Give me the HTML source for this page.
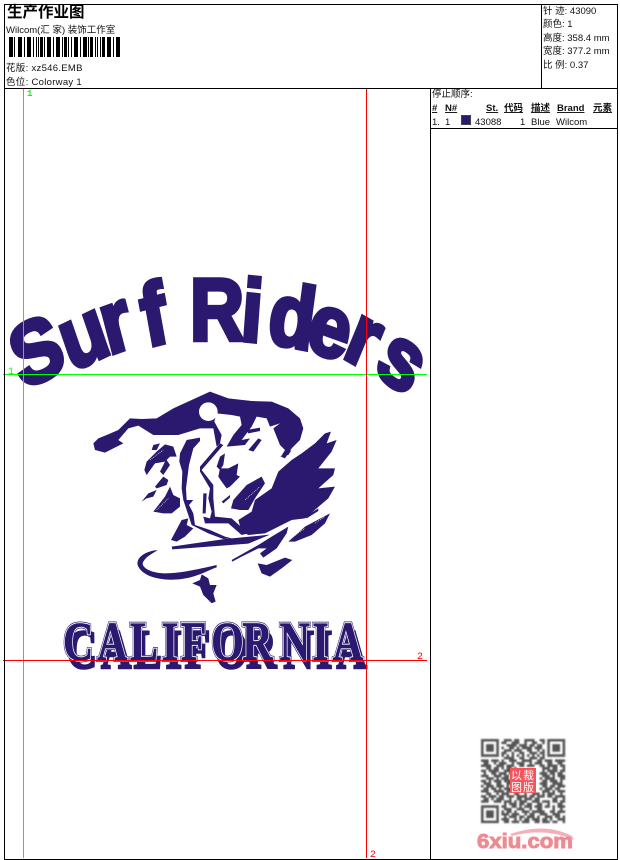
<!DOCTYPE html>
<html><head><meta charset="utf-8"><style>
html,body{margin:0;padding:0;background:#fff;width:620px;height:860px;overflow:hidden}
svg{display:block}
.t{font-family:"Liberation Sans","WenQuanYi Zen Hei","Noto Sans CJK SC",sans-serif;font-size:9.5px;fill:#111}
.b{font-family:"Liberation Sans","Noto Sans CJK SC",sans-serif;font-size:9.5px;font-weight:bold;fill:#111;text-decoration:underline}
.m{font-family:"Liberation Mono",monospace;font-size:10px;font-weight:bold}
</style></head><body>
<svg width="620" height="860" viewBox="0 0 620 860" xmlns="http://www.w3.org/2000/svg">
<defs><filter id="s" x="-5%" y="-5%" width="110%" height="110%"><feGaussianBlur stdDeviation="0.35"/></filter></defs>
<rect width="620" height="860" fill="#fff"/>

<!-- artwork -->
<g fill="#2a196f">
<g transform="scale(.85 1)">
<text font-family="Liberation Sans" font-weight="bold" font-size="88" stroke="#2a196f" stroke-width="4.5" stroke-linejoin="miter" x="27 83.5 128 173 0 223.5 282 313 357 401 438" y="390 372 355 347 0 340 340 342 348 356 371" rotate="-22 -22 -17 -12 0 0 5 9 17 26 33">Surf Riders</text>
</g>

<g transform="translate(85 385) scale(.3333)">
<path d="M25 175 40 160 65 150 100 135 135 100 170 102 215 100 265 70 320 45 375 20 430 40 500 48 560 50 610 70 645 100 655 130 645 165 620 190 600 220 588 215 600 195 585 180 565 130 585 115 555 125 545 100 515 95 500 125 470 165 495 160 480 180 425 185 445 150 470 120 465 95 440 90 395 85 388 110 410 150 405 175 395 185 385 130 345 130 280 150 205 150 160 122 130 130 100 165 115 175 85 190 60 203 30 195Z"/>
<circle cx="370" cy="80" r="28" fill="#fff"/>
<path d="M650 205 690 175 720 145 738 140 725 175 755 165 740 200 700 250 750 250 745 270 700 310 750 305 730 340 660 400 620 405 570 430 540 445 490 450 470 440 460 405 500 380 510 345 560 310 580 260 620 225Z"/>
<path d="M610 470 660 425 735 385 720 415 680 450 630 470ZM660 395 700 370 700 378 665 400Z"/>
<path d="M260 485 420 462 555 449 490 476 262 493Z"/>
<path d="M440 525 520 480 560 455 610 425 605 445 575 490 535 518 525 505 545 490 520 490 470 515 442 530Z"/>
<path d="M518 535 545 540 600 518 622 525 590 550 555 575 530 565Z"/>
<path d="M218 495C170 500 150 525 160 545C175 575 230 590 290 582C340 575 370 555 395 547L395 540C350 550 290 565 240 565C195 565 165 545 175 530C185 512 205 505 218 495Z"/>
<path d="M350 568 370 580 375 600 395 600 385 625 392 650 380 655 355 630 345 605 322 595 345 585Z"/>
<path d="M205 180 225 175 215 195 200 195Z"/>
<path d="M185 230 215 200 240 178 265 185 275 215 255 215 245 225 255 240 235 270 225 260 240 230 210 235 185 270 178 255Z"/>
<path d="M210 305 235 275 250 285 245 300 215 310ZM170 350 190 325 215 315 205 335 185 340Z"/>
<path d="M205 380 240 335 255 305 265 330 285 340 285 365 260 385 235 385Z"/>
<path d="M285 205 305 165 345 158 345 168 325 190 312 240 303 310 305 345 325 345 312 360 325 385 330 420 375 435 420 455 440 460 415 462 370 445 320 420 305 375 295 345 290 310 292 260 283 230Z"/>
<path d="M405 175 415 180 350 255 385 300 385 340 390 395 440 400 490 445 470 450 430 415 360 415 355 395 375 400 380 380 370 340 375 310 345 260 345 245Z"/>
<path d="M355 325 365 325 362 385 353 385Z"/>
<path d="M405 215 420 205 415 240 405 255 395 245ZM430 250 460 235 455 270 465 275 435 305 425 310 410 290 400 275 405 250ZM410 350 435 330 435 338 415 355Z"/>
<path d="M438 370 445 345 485 300 530 275 540 295 510 340 490 375 465 375Z"/>
<path d="M490 195 520 160 530 165 505 200ZM485 135 525 128 525 138 490 145ZM585 215 620 195 610 210Z"/>
<path d="M258 465 290 405 310 400 305 420 325 430 300 455 275 470Z"/>
<path d="M625 455 660 430M690 415 720 395M195 225 235 195M480 345 525 305M215 375 250 340" stroke="#fff" stroke-width="2" stroke-dasharray="3 3" fill="none"/>
</g>
</g>

<!-- CALIFORNIA -->
<g transform="scale(.76 1)" font-family="Liberation Serif" font-weight="bold" font-size="55">
<text x="88 133 176 218 243 283 324 373 416 443" y="668" fill="#2a196f" stroke="#2a196f" stroke-width="2.5">CALIFORNIA</text>
<text x="83 128 171 213 238 278 319 368 411 438" y="660" fill="#fff" stroke="#2a196f" stroke-width="4">CALIFORNIA</text>
<text x="83 128 171 213 238 278 319 368 411 438" y="660" fill="#fff" stroke="#fff" stroke-width="2.6">CALIFORNIA</text>
<text x="83 128 171 213 238 278 319 368 411 438" y="660" fill="#2a196f" stroke="#2a196f" stroke-width=".8">CALIFORNIA</text>
</g>

<!-- guides -->
<rect x="23" y="89" width="1" height="769" fill="#0f0"/>
<rect x="3" y="374" width="424" height="1" fill="#0f0"/>
<rect x="366" y="89" width="1" height="769" fill="#f00"/>
<rect x="3" y="660" width="424" height="1" fill="#f00"/>
<text class="m" x="27" y="96" fill="#0f0" style="font-size:9px">1</text>
<text class="m" x="8" y="374" fill="#0f0" style="font-size:10px;font-weight:normal">1</text>
<text class="m" x="417" y="659" fill="#f00" style="font-weight:normal">2</text>
<text class="m" x="370" y="857" fill="#f00" style="font-weight:normal">2</text>

<!-- frame -->
<g fill="#000">
<rect x="4" y="4" width="614" height="1"/>
<rect x="4" y="859" width="614" height="1"/>
<rect x="4" y="4" width="1" height="856"/>
<rect x="617" y="4" width="1" height="856"/>
<rect x="4" y="88" width="614" height="1"/>
<rect x="541" y="4" width="1" height="85"/>
<rect x="430" y="88" width="1" height="772"/>
<rect x="430" y="128" width="188" height="1"/>
</g>

<!-- header -->
<text x="7" y="17" font-family="'WenQuanYi Zen Hei','Noto Sans CJK SC',sans-serif" font-size="15.5" font-weight="bold" fill="#000">生产作业图</text>
<text class="t" x="6" y="33">Wilcom(汇 家) 装饰工作室</text>
<path stroke="#000" fill="none" stroke-width="1" d="M9.5 37V57M12.5 37V57M14.5 37V57M18.5 37V57M21.5 37V57M24.5 37V57M27.5 37V57M30.5 37V57M33.5 37V57M36.5 37V57M38.5 37V57M42.5 37V57M44.5 37V57M47.5 37V57M50.5 37V57M53.5 37V57M56.5 37V57M59.5 37V57M62.5 37V57M66.5 37V57M68.5 37V57M71.5 37V57M74.5 37V57M77.5 37V57M80.5 37V57M83.5 37V57M86.5 37V57M88.5 37V57M92.5 37V57M95.5 37V57M97.5 37V57M100.5 37V57M104.5 37V57M107.5 37V57M110.5 37V57M113.5 37V57M116.5 37V57M119.5 37V57"/>
<path stroke="#000" fill="none" stroke-width="2" d="M11 37V57M20 37V57M29 37V57M41 37V57M49 37V57M58 37V57M65 37V57M76 37V57M85 37V57M91 37V57M103 37V57M109 37V57M118 37V57"/>
<text class="t" x="6" y="71" letter-spacing=".3">花版: xz546.EMB</text>
<text class="t" x="6" y="85" letter-spacing=".3">色位: Colorway 1</text>

<text class="t" x="543" y="14">针 迹: 43090</text>
<text class="t" x="543" y="27">颜色: 1</text>
<text class="t" x="543" y="41">高度: 358.4 mm</text>
<text class="t" x="543" y="54">宽度: 377.2 mm</text>
<text class="t" x="543" y="68">比 例: 0.37</text>

<text class="t" x="432" y="97">停止顺序:</text>
<text class="b" x="432" y="111">#</text>
<text class="b" x="445" y="111">N#</text>
<text class="b" x="486" y="111">St.</text>
<text class="b" x="504" y="111">代码</text>
<text class="b" x="531" y="111">描述</text>
<text class="b" x="557" y="111">Brand</text>
<text class="b" x="593" y="111">元素</text>
<text class="t" x="432" y="125">1.</text>
<text class="t" x="445" y="125">1</text>
<rect x="461.5" y="115.5" width="9" height="9" fill="#2a196f" stroke="#444"/>
<text class="t" x="475" y="125">43088</text>
<text class="t" x="520" y="125">1</text>
<text class="t" x="531" y="125">Blue</text>
<text class="t" x="556" y="125">Wilcom</text>

<!-- QR -->
<g transform="translate(481 739) scale(2.55)" filter="url(#s)">
<path fill="none" stroke="#555" stroke-width="1" d="
M0 .5h7M9 .5h3M13 .5h2M17 .5h4M23 .5h2M26 .5h7
M0 1.5h1M6 1.5h1M8 1.5h2M12 1.5h3M17 1.5h1M20 1.5h2M24 1.5h1M26 1.5h1M32 1.5h1
M0 2.5h1M2 2.5h3M6 2.5h1M10 2.5h4M15 2.5h3M19 2.5h2M22 2.5h2M26 2.5h1M28 2.5h3M32 2.5h1
M0 3.5h1M2 3.5h3M6 3.5h1M8 3.5h1M11 3.5h2M14 3.5h1M16 3.5h4M21 3.5h3M26 3.5h1M28 3.5h3M32 3.5h1
M0 4.5h1M2 4.5h3M6 4.5h1M9 4.5h3M13 4.5h3M18 4.5h2M22 4.5h1M24 4.5h1M26 4.5h1M28 4.5h3M32 4.5h1
M0 5.5h1M6 5.5h1M8 5.5h2M12 5.5h1M15 5.5h2M19 5.5h3M23 5.5h2M26 5.5h1M32 5.5h1
M0 6.5h7M8 6.5h1M10 6.5h1M12 6.5h1M14 6.5h1M16 6.5h1M18 6.5h1M20 6.5h1M22 6.5h1M24 6.5h1M26 6.5h7
M9 7.5h4M15 7.5h2M19 7.5h3M23 7.5h2
M0 8.5h3M4 8.5h3M8 8.5h1M11 8.5h3M16 8.5h4M22 8.5h2M25 8.5h3M29 8.5h4
M1 9.5h2M5 9.5h1M7 9.5h3M12 9.5h1M14 9.5h3M19 9.5h1M21 9.5h3M26 9.5h2M30 9.5h2
M0 10.5h4M6 10.5h3M10 10.5h3M15 10.5h2M18 10.5h3M23 10.5h2M26 10.5h4M31 10.5h2
M2 11.5h2M5 11.5h2M8 11.5h1M10 11.5h2M13 11.5h1M24 11.5h3M28 11.5h2M32 11.5h1
M0 12.5h2M3 12.5h4M9 12.5h3M24 12.5h1M26 12.5h4M31 12.5h2
M1 13.5h1M4 13.5h2M7 13.5h3M11 13.5h1M23 13.5h3M27 13.5h2M30 13.5h2
M0 14.5h3M5 14.5h3M9 14.5h2M24 14.5h3M28 14.5h1M30 14.5h3
M2 15.5h3M6 15.5h1M8 15.5h3M23 15.5h1M25 15.5h4M31 15.5h2
M0 16.5h2M3 16.5h1M5 16.5h3M9 16.5h3M24 16.5h2M27 16.5h3M31 16.5h1
M1 17.5h3M6 17.5h2M10 17.5h2M23 17.5h3M28 17.5h4
M0 18.5h1M2 18.5h3M6 18.5h3M10 18.5h1M24 18.5h2M27 18.5h2M30 18.5h3
M1 19.5h2M4 19.5h2M7 19.5h1M9 19.5h3M23 19.5h1M25 19.5h3M29 19.5h2
M0 20.5h3M5 20.5h4M10 20.5h2M24 20.5h3M28 20.5h1M30 20.5h3
M2 21.5h2M6 21.5h1M8 21.5h3M13 21.5h2M17 21.5h1M20 21.5h3M24 21.5h1M26 21.5h3M31 21.5h1
M0 22.5h2M3 22.5h3M7 22.5h2M10 22.5h3M14 22.5h4M19 22.5h2M22 22.5h3M26 22.5h2M29 22.5h4
M1 23.5h2M4 23.5h1M6 23.5h3M11 23.5h1M14 23.5h2M17 23.5h3M21 23.5h2M28 23.5h2M32 23.5h1
M0 24.5h3M5 24.5h3M9 24.5h3M13 24.5h1M15 24.5h3M20 24.5h3M24 24.5h3M28 24.5h2M31 24.5h2
M9 25.5h1M11 25.5h3M15 25.5h2M18 25.5h2M22 25.5h2M26 25.5h1M30 25.5h2
M0 26.5h7M8 26.5h2M12 26.5h2M15 26.5h1M17 26.5h3M21 26.5h3M25 26.5h2M28 26.5h1M30 26.5h3
M0 27.5h1M6 27.5h1M9 27.5h3M14 27.5h3M19 27.5h1M22 27.5h2M28 27.5h1M31 27.5h1
M0 28.5h1M2 28.5h3M6 28.5h1M8 28.5h1M10 28.5h2M13 28.5h1M16 28.5h3M20 28.5h5M27 28.5h2M30 28.5h3
M0 29.5h1M2 29.5h3M6 29.5h1M8 29.5h3M12 29.5h3M17 29.5h1M19 29.5h2M23 29.5h3M28 29.5h3
M0 30.5h1M2 30.5h3M6 30.5h1M9 30.5h1M11 30.5h3M15 30.5h2M18 30.5h3M22 30.5h1M25 30.5h3M29 30.5h2M32 30.5h1
M0 31.5h1M6 31.5h1M8 31.5h3M13 31.5h1M15 31.5h1M17 31.5h2M20 31.5h3M24 31.5h2M27 31.5h1M30 31.5h3
M0 32.5h7M9 32.5h2M12 32.5h3M16 32.5h3M21 32.5h2M24 32.5h3M28 32.5h2M32 32.5h1"/>
</g>
<rect x="510" y="768" width="26" height="25" fill="#f4555c"/>
<g font-family="'Noto Sans CJK SC',sans-serif" font-size="11" fill="#fff">
<text x="511" y="779">以</text><text x="523" y="779">裁</text>
<text x="511" y="791">图</text><text x="523" y="791">版</text>
</g>

<!-- logo -->
<path d="M510 834Q545 822 572 836L574 840Q545 827 512 836Z" fill="#f4b0b6"/>
<text x="477" y="848" font-family="Liberation Sans" font-weight="bold" font-size="20" fill="#ee8a92" stroke="#ee8a92" stroke-width=".9" textLength="96" lengthAdjust="spacingAndGlyphs">6xiu.com</text>
</svg>
</body></html>
